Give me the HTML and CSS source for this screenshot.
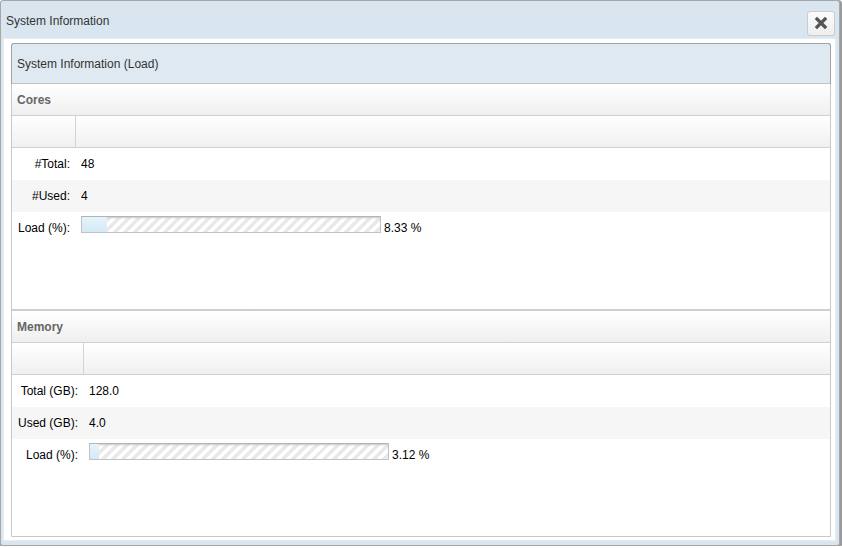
FILE: index.html
```html
<!DOCTYPE html>
<html>
<head>
<meta charset="utf-8">
<link rel="stylesheet" href="styles.css">
</head>
<body>
<div class="window">
  <div class="win-header">
    <span class="win-title">System Information</span>
    <button class="close-btn" aria-label="Close">
      <svg width="14" height="14" viewBox="0 0 14 14"><path d="M3 3 L11 11 M11 3 L3 11" stroke="#555" stroke-width="3.2" stroke-linecap="square"/></svg>
    </button>
  </div>
  <div class="win-body">
    <div class="panel">
      <div class="panel-header">System Information (Load)</div>
      <div class="section cores">
        <div class="sec-header">Cores</div>
        <div class="grid cores-grid">
          <div class="row colhead"><div class="lbl"></div><div class="val"></div></div>
          <div class="row"><div class="lbl">#Total:</div><div class="val">48</div></div>
          <div class="row alt"><div class="lbl">#Used:</div><div class="val">4</div></div>
          <div class="row"><div class="lbl">Load (%):</div><div class="val"><div class="bar"><div class="fill" style="width:25px"></div></div><span class="pct">8.33 %</span></div></div>
        </div>
      </div>
      <div class="section memory">
        <div class="sec-header">Memory</div>
        <div class="grid mem-grid">
          <div class="row colhead"><div class="lbl"></div><div class="val"></div></div>
          <div class="row"><div class="lbl">Total (GB):</div><div class="val">128.0</div></div>
          <div class="row alt"><div class="lbl">Used (GB):</div><div class="val">4.0</div></div>
          <div class="row"><div class="lbl">Load (%):</div><div class="val"><div class="bar"><div class="fill" style="width:9px"></div></div><span class="pct">3.12 %</span></div></div>
        </div>
      </div>
    </div>
  </div>
</div>
</body>
</html>
```
FILE: styles.css
```css
* { box-sizing: border-box; }
html, body { margin: 0; padding: 0; background: #fff; }
body { font-family: "Liberation Sans", Arial, sans-serif; font-size: 12px; color: #000; }

.window {
  width: 840px;
  height: 546px;
  background: #d9e5ef;
  border: 1px solid #a5a8ab;
  border-radius: 3px;
  box-shadow: 1px 1px 0 1px #9a9a9a;
  display: flex;
  flex-direction: column;
}
.win-header {
  height: 37px;
  display: flex;
  align-items: center;
  justify-content: space-between;
  padding: 0 4px 0 5px;
}
.win-title { color: #333; font-size: 12px; margin-top: 2px; }
.close-btn {
  width: 28px;
  height: 25px;
  margin-top: 7px;
  border: 1px solid #c9cdd1;
  border-radius: 3px;
  background: linear-gradient(#fbfbfb, #eeeeee);
  padding: 0;
  display: flex;
  align-items: center;
  justify-content: center;
}
.win-body {
  flex: 1;
  margin: 0 3px 4px 2px;
  background: #fff;
  border: 1px solid #e6edf3;
  padding: 4px 4px 3px 7px;
  display: flex;
}
.panel {
  flex: 1;
  border: 1px solid #c8c8c8;
  border-radius: 3px 3px 0 0;
  display: flex;
  flex-direction: column;
  background: #fff;
}
.panel-header {
  height: 41px;
  flex: none;
  background: #dfe9f2;
  border: 1px solid #9ea3a8;
  border-radius: 3px 3px 0 0;
  margin: -1px -1px 0 -1px;
  border-bottom: 1px solid #c0c3c6;
  padding: 13px 0 0 5px;
  color: #333;
}
.section { display: flex; flex-direction: column; }
.cores { height: 227px; flex: none; border-bottom: 2px solid #cfcfcf; }
.memory { flex: 1; }
.sec-header {
  height: 32px;
  background: linear-gradient(#ffffff, #efefef);
  border-bottom: 1px solid #d0d0d0;
  font-weight: bold;
  color: #666;
  padding: 9px 0 0 5px;
}
.grid { display: flex; flex-direction: column; }
.row { display: flex; height: 32px; align-items: center; }
.row.alt { background: #f6f6f6; }
.row.colhead {
  background: linear-gradient(#ffffff, #f0f0f0);
  border-bottom: 1px solid #d0d0d0;
  align-items: stretch;
}
.row.colhead .lbl { border-right: 1px solid #d3d3d3; }
.lbl { text-align: right; padding-right: 6px; flex: none; }
.cores-grid .lbl { width: 64px; }
.mem-grid .lbl { width: 72px; }
.row .val { padding-left: 5px; display: flex; align-items: center; align-self: stretch; flex: 1; }
.row.colhead .val { padding: 0; }
.bar {
  width: 300px;
  height: 17px;
  align-self: flex-start;
  margin-top: 4px;
  border: 1px solid #c2c2c2;
  border-top-color: #b4b4b4;
  background: repeating-linear-gradient(135deg, #ffffff 0 3.6px, #e9e9e9 3.6px 7.1px);
  box-shadow: inset 0 2px 2px -1px #c8c8c8;
}
.fill { height: 100%; background: linear-gradient(#e6f3fb, #d4e9f7); }
.pct { margin-left: 3px; }
```
